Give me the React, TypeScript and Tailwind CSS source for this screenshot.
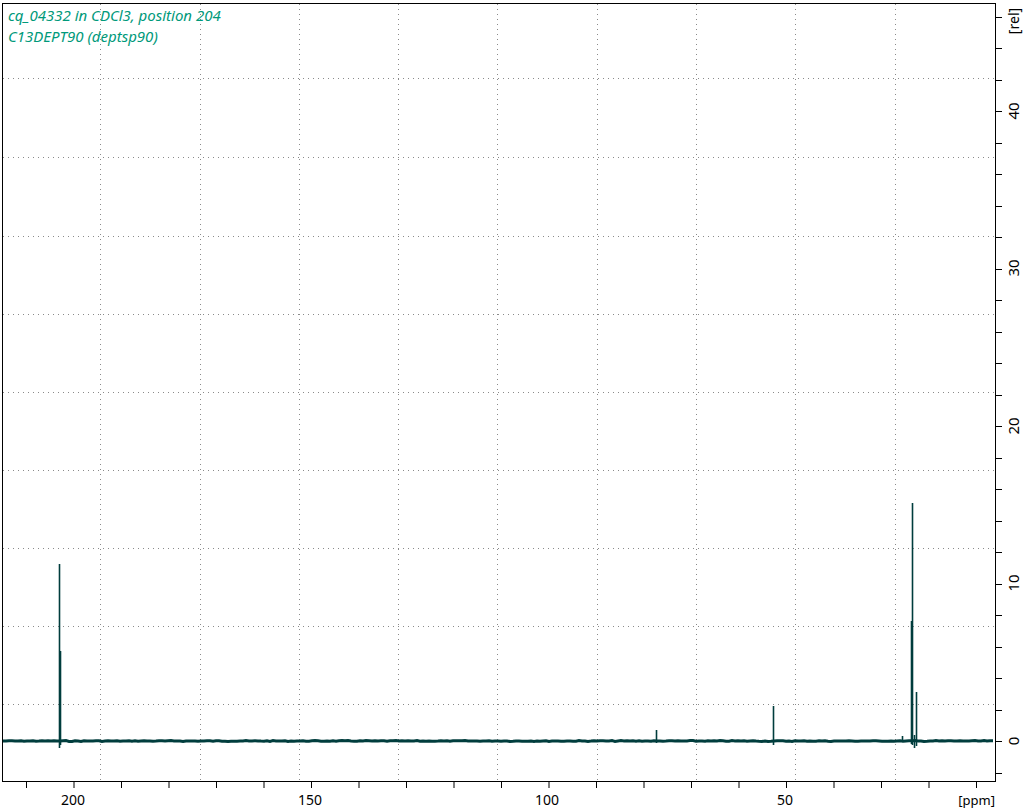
import React from 'react'

const GRID_X = [100, 200, 299, 398, 497, 597, 696, 795, 895]
const GRID_Y = [78, 157, 236, 314, 392, 470, 548, 626, 704]
const PPM_LABELS = [
  { x: 73, t: '200' },
  { x: 310, t: '150' },
  { x: 547, t: '100' },
  { x: 785, t: '50' },
]
const REL_LABELS = [
  { y: 741, t: '0' },
  { y: 583, t: '10' },
  { y: 426, t: '20' },
  { y: 268, t: '30' },
  { y: 111, t: '40' },
]

// peaks: x, top y, bottom y
const PEAKS: [number, number, number][] = [
  [59, 564, 748],
  [60, 651, 745],
  [656, 730, 743],
  [773, 706, 745],
  [912, 503, 745],
  [911, 621, 744],
  [916, 692, 746],
  [914, 735, 748],
  [902, 736, 742],
]

function noise() {
  let s = 7
  const pts: string[] = []
  for (let x = 3; x <= 995; x += 3) {
    s = (s * 9301 + 49297) % 233280
    const d = (s / 233280 - 0.5) * 0.8
    pts.push(`${x},${(741 + d).toFixed(1)}`)
  }
  return pts.join(' ')
}

export default function App() {
  const xTicks: number[] = []
  for (let x = 26; x <= 990; x += 47.5) xTicks.push(x)
  const yTicks: number[] = []
  for (let y = 772.5; y >= 5; y -= 31.5) yTicks.push(y)

  return (
    <div className="w-[1027px] h-[811px] bg-white overflow-hidden font-['DejaVu_Sans',sans-serif]">
      <svg width="1027" height="811" viewBox="0 0 1027 811">
        {GRID_X.map(x => (
          <line key={'gx' + x} x1={x + 0.5} y1={4} x2={x + 0.5} y2={781} stroke="#8a8a8a" strokeDasharray="1 4" />
        ))}
        {GRID_Y.map(y => (
          <line key={'gy' + y} x1={3} y1={y + 0.5} x2={995} y2={y + 0.5} stroke="#8a8a8a" strokeDasharray="1 4" />
        ))}

        <polyline points={noise()} fill="none" stroke="#003d3d" strokeWidth="3" />
        {PEAKS.map(([x, t, b], i) => (
          <line key={i} x1={x + 0.5} y1={t} x2={x + 0.5} y2={b} stroke="#003d3d" strokeWidth="1.6" />
        ))}

        <rect x={2.5} y={3.5} width={993} height={778} fill="none" stroke="#000" strokeWidth="1" />

        {xTicks.map(x => (
          <line key={'xt' + x} x1={x + 0.5} y1={782} x2={x + 0.5} y2={788} stroke="#000" />
        ))}
        {yTicks.map(y => (
          <line key={'yt' + y} x1={996} y1={Math.round(y) + 0.5} x2={1002} y2={Math.round(y) + 0.5} stroke="#000" />
        ))}

        {PPM_LABELS.map(l => (
          <text key={l.t} x={l.x} y={805} fontSize="14" textAnchor="middle" fill="#000">{l.t}</text>
        ))}
        <text x={995} y={805} fontSize="13" textAnchor="end" fill="#000">[ppm]</text>

        {REL_LABELS.map(l => (
          <text key={l.t} x={1019} y={l.y} fontSize="15" textAnchor="middle" fill="#000" transform={`rotate(-90 1019 ${l.y})`}>{l.t}</text>
        ))}
        <text x={1019} y={21} fontSize="14" textAnchor="middle" fill="#000" transform="rotate(-90 1019 21)">[rel]</text>

        <text x={8} y={21} fontSize="15" fontStyle="italic" fill="#00997a">cq_04332 in CDCl3, position 204</text>
        <text x={8} y={42} fontSize="15" fontStyle="italic" fill="#00997a">C13DEPT90 (deptsp90)</text>
      </svg>
    </div>
  )
}
